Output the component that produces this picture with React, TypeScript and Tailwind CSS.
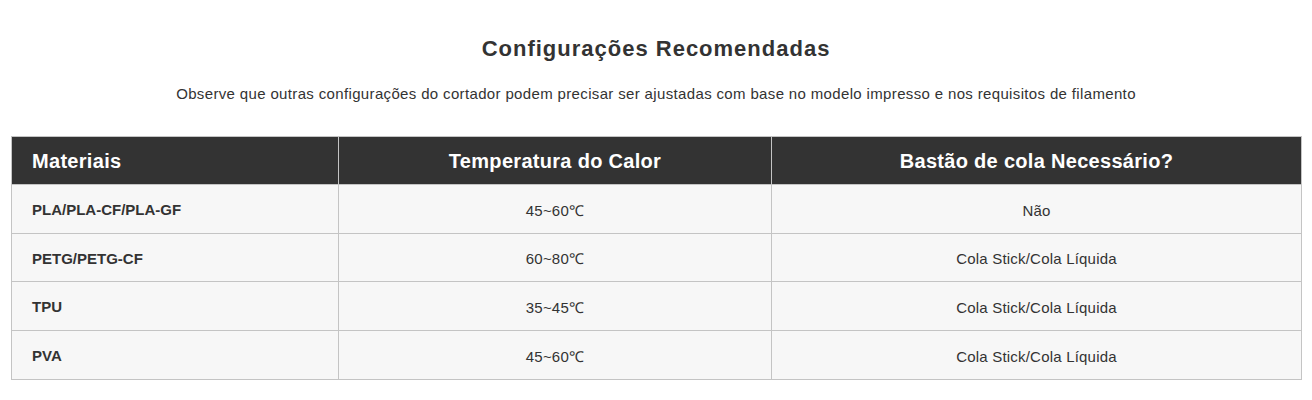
import React from 'react';

const rows = [
  { material: 'PLA/PLA-CF/PLA-GF', temp: '45~60℃', glue: 'Não' },
  { material: 'PETG/PETG-CF', temp: '60~80℃', glue: 'Cola Stick/Cola Líquida' },
  { material: 'TPU', temp: '35~45℃', glue: 'Cola Stick/Cola Líquida' },
  { material: 'PVA', temp: '45~60℃', glue: 'Cola Stick/Cola Líquida' },
];

export default function App() {
  return (
    <div className="w-[1312px] h-[400px] bg-white pt-[36px] font-['Liberation_Sans',Arial,sans-serif] text-[#333333]">
      <h2 className="text-center text-[22px] leading-[26px] tracking-[1px] font-bold text-[#333333]">
        Configurações Recomendadas
      </h2>
      <p className="text-center text-[15px] leading-[20px] tracking-[0.35px] mt-[22px] text-[#333333]">
        Observe que outras configurações do cortador podem precisar ser ajustadas com base no modelo impresso e nos requisitos de filamento
      </p>

      <div className="mx-[11px] mt-[32px]">
        <table className="w-[1290px] border-collapse table-fixed">
          <colgroup>
            <col className="w-[327px]" />
            <col className="w-[433px]" />
            <col className="w-[530px]" />
          </colgroup>
          <thead>
            <tr className="bg-[#333333] text-white h-[48px]">
              <th className="border border-[#c4c4c4] text-left pl-[20px] text-[20px] tracking-[0.3px] font-bold">Materiais</th>
              <th className="border border-[#c4c4c4] text-center text-[20px] tracking-[0.3px] font-bold">Temperatura do Calor</th>
              <th className="border border-[#c4c4c4] text-center text-[20px] tracking-[0.3px] font-bold">Bastão de cola Necessário?</th>
            </tr>
          </thead>
          <tbody>
            {rows.map((r, i) => (
              <tr key={r.material} className={`bg-[#f7f7f7] ${i === 1 ? 'h-[48px]' : 'h-[49px]'}`}>
                <td className="border border-[#c4c4c4] pl-[20px] pt-[3px] text-[15px] font-bold text-[#333333]">{r.material}</td>
                <td className="border border-[#c4c4c4] text-center text-[15px] tracking-[0.2px] pt-[4px] text-[#333333]">{r.temp}</td>
                <td className="border border-[#c4c4c4] text-center text-[15px] tracking-[0.2px] pt-[4px] text-[#333333]">{r.glue}</td>
              </tr>
            ))}
          </tbody>
        </table>
      </div>
    </div>
  );
}
